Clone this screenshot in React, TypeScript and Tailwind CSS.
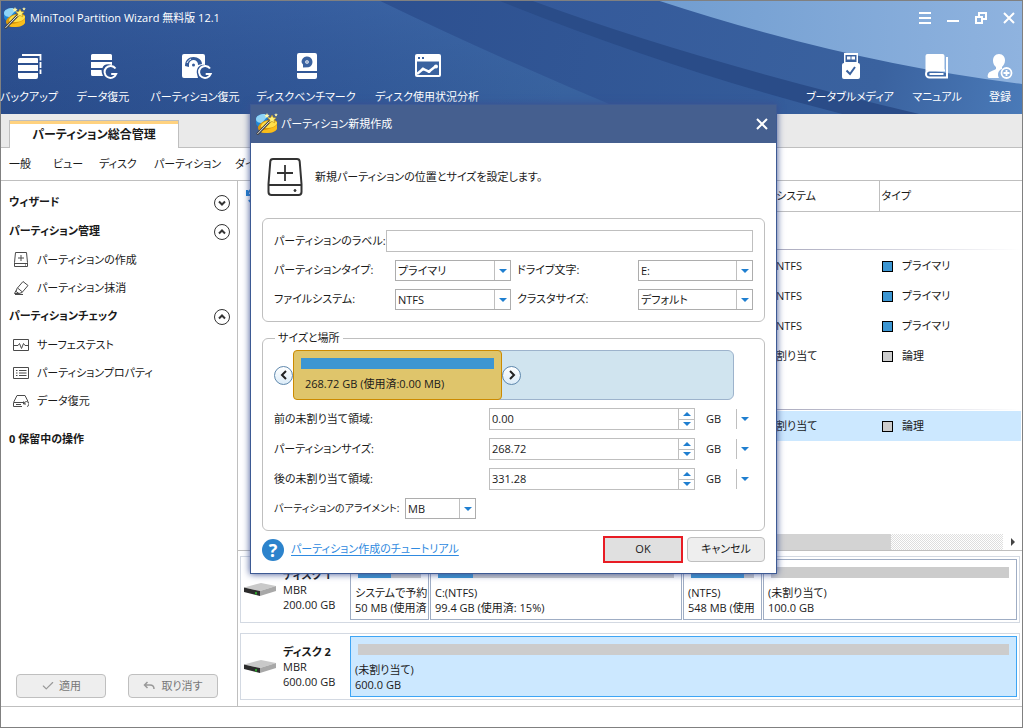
import React from 'react'
import { FiCheck } from 'react-icons/fi'

interface SIDE_ITEM {
  icon: string
  label: string
}

interface PARTITION {
  title: string
  size: string
  used: number
  className: string
}

const managementItems: SIDE_ITEM[] = [
  { icon: 'create', label: 'パーティションの作成' },
  { icon: 'wipe', label: 'パーティション抹消' },
]

const checkItems: SIDE_ITEM[] = [
  { icon: 'surface', label: 'サーフェステスト' },
  { icon: 'props', label: 'パーティションプロパティ' },
  { icon: 'recover', label: 'データ復元' },
]

const diskOne: PARTITION[] = [
  { title: 'システムで予約', size: '50 MB (使用済', used: 52, className: 'w-[79px]' },
  { title: 'C:(NTFS)', size: '99.4 GB (使用済: 15%)', used: 15, className: 'w-[252px]' },
  { title: '(NTFS)', size: '548 MB (使用', used: 84, className: 'w-[79px]' },
  { title: '(未割り当て)', size: '100.0 GB', used: 0, className: 'flex-1' },
]

/* ---------- drawings ---------- */

function AppLogo() {
  return (
    <svg viewBox="0 0 22 22" className="size-[22px] shrink-0" aria-hidden="true">
      <path d="M0 6c0-3 4-5 9-5l3 4-6 10C2 14 0 12 0 10z" fill="#1f87d6" />
      <path d="M0 6c0-3 4-5 9-5l2 3-5 6C3 10 0 9 0 6z" fill="#8fd4f7" />
      <path d="M2 14c1-3 5-6 10-7s8 0 9 2v6c-1 4-6 5-11 5s-8-2-8-6z" fill="#dd9a0a" />
      <path d="M5 13c1-3 4-5 8-5s8 0 8 2-4 5-9 5-7 0-7-2z" fill="#ffe04a" />
      <path d="M3 17c5 1 13-1 18-5v4c-2 3-6 4-11 4-4 0-6-1-7-3z" fill="#f9bd1b" />
      <path d="M1 21.500 15 7" stroke="#444" strokeWidth="2.600" />
      <path d="M1.500 20.800 14 8" stroke="#e8e8e8" strokeWidth="1" />
      <path d="m16 2 1.300 2.600 2.900.3-2.200 2 .7 2.900L16 8.400l-2.700 1.400.7-2.900-2.200-2 2.900-.3z" fill="#fff27a" stroke="#b98a10" strokeWidth=".6" />
      <path d="m11 0 .8 1.700 1.800.2-1.300 1.300.3 1.800-1.600-.9-1.600.9.3-1.800-1.300-1.300 1.800-.2z" fill="#fff6a8" />
      <path d="m20 0 .5 1.200 1.300.1-1 .9.3 1.300-1.100-.7-1.100.7.3-1.300-1-.9 1.300-.1z" fill="#fff6a8" />
    </svg>
  )
}

function HeaderBackdrop() {
  return (
    <svg viewBox="0 0 1023 113" preserveAspectRatio="none" className="absolute inset-0 size-full" aria-hidden="true">
      <defs>
        <linearGradient id="base" x1="0" y1="0" x2="1" y2="0">
          <stop offset="0" stopColor="#2c4f8f" />
          <stop offset=".3" stopColor="#345b9c" />
          <stop offset=".55" stopColor="#3e6aa7" />
        </linearGradient>
        <linearGradient id="shade" x1="0" y1="0" x2="0" y2="1">
          <stop offset="0" stopColor="#3d66a8" stopOpacity=".3" />
          <stop offset="1" stopColor="#1e3f78" stopOpacity=".2" />
        </linearGradient>
        <linearGradient id="mid" x1="380" y1="0" x2="1023" y2="113" gradientUnits="userSpaceOnUse">
          <stop offset="0" stopColor="#2d5090" />
          <stop offset=".6" stopColor="#345b99" />
          <stop offset="1" stopColor="#3f6cab" />
        </linearGradient>
        <linearGradient id="upper" x1="540" y1="0" x2="1023" y2="113" gradientUnits="userSpaceOnUse">
          <stop offset="0" stopColor="#34599a" />
          <stop offset=".7" stopColor="#3a629f" />
          <stop offset="1" stopColor="#4a7ab8" />
        </linearGradient>
        <linearGradient id="sky" x1="0" y1="0" x2="1" y2="0">
          <stop offset="0" stopColor="#719dd0" />
          <stop offset="1" stopColor="#8fb3df" />
        </linearGradient>
      </defs>
      <rect width="1023" height="113" fill="url(#base)" />
      <rect width="640" height="113" fill="url(#shade)" />
      <path d="M380 0Q500 58 633 113H1023V0z" fill="url(#mid)" />
      <path d="M500 0Q675 70 843 113H1023V0z" fill="#2a4c88" />
      <path d="M533 0Q690 58 920 113H1023V0z" fill="url(#upper)" />
      <path d="M660 0Q850 62 1023 83V0z" fill="url(#sky)" />
    </svg>
  )
}

function ToolIcon({ name }: { name: string }) {
  const icons: { [key: string]: React.ReactNode } = {
    backup: (
      <>
        <path d="M7 2h18.500V21" fill="none" stroke="#fff" strokeWidth="1.800" strokeDasharray="24 1.500 6 1.500" />
        <path d="M5 5h17a1 1 0 0 1 1 1v4H3V7a2 2 0 0 1 2-2zM3 12h20v6H3zM3 20h20v4a2 2 0 0 1-2 2H5a2 2 0 0 1-2-2z" fill="#fff" />
      </>
    ),
    data: (
      <>
        <path d="M3.500 1h18A1.500 1.500 0 0 1 23 2.500V7H2V2.500A1.500 1.500 0 0 1 3.500 1zM2 9h21v3c-5-2-9 0-9.500 3H2zM2 17h10.500c0 2 .5 4 1.500 6H3.500A1.500 1.500 0 0 1 2 21.500z" fill="#fff" />
        <path d="M26.500 15.500a6 6 0 1 0 .7 5.500h-5" fill="none" stroke="#fff" strokeWidth="2" />
      </>
    ),
    partition: (
      <>
        <path d="M3 1h19a2 2 0 0 1 2 2v9c-6-1-9 4-8 9l1 4H3a2 2 0 0 1-2-2V3a2 2 0 0 1 2-2z" fill="#fff" />
        <path d="M4 13C4 7 8 4 12.500 4S21 7 21 11l-4 1a4.500 4.500 0 0 0-9-1v3z" fill="#345b9a" />
        <path d="M6 10c1-2 2-3 4-4" stroke="#fff" fill="none" />
        <circle cx="12.500" cy="12" r="1.500" fill="#345b9a" />
        <path d="M29 15.500a6 6 0 1 0 .7 5.500h-5" fill="none" stroke="#fff" strokeWidth="2" />
      </>
    ),
    bench: (
      <>
        <path d="M7 0h16a2 2 0 0 1 2 2v16H5V2a2 2 0 0 1 2-2zM5 20h20v4a2 2 0 0 1-2 2H7a2 2 0 0 1-2-2z" fill="#fff" />
        <path d="M9.500 9a5.500 5.500 0 1 1 7 5.300L11 14.500v-3A5 5 0 0 1 9.500 9z" fill="#3a629f" />
        <circle cx="15" cy="9" r="1.800" fill="#fff" />
        <circle cx="15" cy="9" r=".8" fill="#3a629f" />
      </>
    ),
    usage: (
      <>
        <rect x="2" y="1" width="26" height="23" rx="2" fill="#fff" />
        <path d="M4 8.500h22v13.500H4z" fill="#3a629f" />
        <path d="M5 4h2v2H5zM9 4h2v2H9z" fill="#3a629f" />
        <path d="m4 21 6-5 6 2.500 7-5.500" stroke="#fff" strokeWidth="2.400" fill="none" />
        <circle cx="23" cy="13.500" r="2" fill="#fff" />
        <circle cx="10" cy="16" r="1.600" fill="#fff" />
        <circle cx="16" cy="18.500" r="1.600" fill="#fff" />
      </>
    ),
    usb: (
      <>
        <path d="M8 0h14v10H8z" fill="#fff" />
        <path d="M9.500 2h11v7h-11z" fill="#3a629f" />
        <path d="M11 3.500h3.500v3H11zM15.500 3.500H19v3h-3.500z" fill="#fff" />
        <rect x="6" y="10" width="18" height="16" rx="2" fill="#fff" />
        <path d="m10.500 17.500 3.500 3.500 5-7" stroke="#3a629f" strokeWidth="2" fill="none" />
      </>
    ),
    manual: (
      <>
        <path d="M4.500 1h15a2 2 0 0 1 2 2v14H6.500c-2 0-4 1-4 3V3a2 2 0 0 1 2-2z" fill="#fff" />
        <path d="M24 4v20.500H6.500a3.500 3.500 0 0 1 0-7H22" fill="none" stroke="#fff" strokeWidth="2" />
        <path d="M6.500 20h14v2h-14z" fill="#fff" />
      </>
    ),
    register: (
      <>
        <path d="M13 1c4 0 6 3 6 6.500 0 3-1.500 5-3 6.500v2c-4 1-5 6-3 9H3c-2 0-1.500-4 0-5.500 2-1.500 6-2.500 7-3.500v-2c-2-1.500-3-3.500-3-6.500C7 4 9 1 13 1z" fill="#fff" />
        <circle cx="20.500" cy="20" r="5" fill="none" stroke="#fff" strokeWidth="1.800" />
        <path d="M20.500 17v6M17.500 20h6" stroke="#fff" strokeWidth="1.800" />
      </>
    ),
  }
  return (
    <svg viewBox="0 0 28 27" className="h-[27px] w-7 shrink-0 overflow-visible" aria-hidden="true">
      {icons[name]}
    </svg>
  )
}

function SideIcon({ name }: { name: string }) {
  const icons: { [key: string]: React.ReactNode } = {
    create: <path d="M2.500.5h11l1 10v4h-13v-4zM1.500 11.500h13M8 3v6M5 6h6M12 13h1" />,
    wipe: <path d="m10 1.500 5 4-6 7-3 1-3-2 1-3zM4.500 8l5 4M6 13.500H1.500l1.500-3M2 14.500h8" />,
    surface: <path d="M.5 2.500h15v11H.5zM1 8.500h4l1.500-2 2 5 2-5 1.500 2h3" />,
    props: <path d="M.5 2.500h15v11H.5zM3 5.500h1.500M6 5.500h7.500M3 8h1.500M6 8h7.500M3 10.500h1.500M6 10.500h7.500" />,
    recover: <path d="M.5 9.500 4 2.500h8l3 6M.5 9.500v4H9M1 9.500h9M3 11.500h5M11 11a2.500 2.500 0 1 1 3 2.500M10.500 8.500v2.500h2.500" />,
  }
  return (
    <svg viewBox="0 0 16 16" className="size-4 shrink-0 fill-none stroke-[#4a4a4a] stroke-1" aria-hidden="true">
      {icons[name]}
    </svg>
  )
}

function DiskDrawing() {
  return (
    <svg viewBox="0 0 32 14" className="h-[14px] w-8 shrink-0" aria-hidden="true">
      <path d="M0 4.500 17 0l15 3-16 5z" fill="#c9c9c9" />
      <path d="M16 8 32 3v5l-16 5z" fill="#a8a8a8" />
      <path d="M0 4.500 16 8v5L0 9z" fill="#2c2c2c" />
      <path d="M12 9v2.500" stroke="#2ec52e" strokeWidth="1.500" />
    </svg>
  )
}

function Triangle({ up }: { up?: boolean }) {
  return (
    <svg viewBox="0 0 8 4" className="h-1 w-2 fill-[#1f7fd0]" aria-hidden="true">
      <path d={up ? 'M0 4h8L4 0z' : 'M0 0h8L4 4z'} />
    </svg>
  )
}

/* ---------- header ---------- */

function ToolButton({ icon, label, className }: { icon: string; label: string; className: string }) {
  return (
    <button className={`flex flex-col items-center gap-[9px] whitespace-nowrap ${className}`}>
      <ToolIcon name={icon} />
      <span className="leading-4">{label}</span>
    </button>
  )
}

function Header() {
  return (
    <header className="relative h-[113px] text-white">
      <HeaderBackdrop />
      <div className="relative flex h-[34px] items-center justify-between pl-[3px] pr-[7px]">
        <div className="flex items-center gap-1">
          <AppLogo />
          <h1>MiniTool Partition Wizard 無料版 12.1</h1>
        </div>
        <div className="flex gap-4 fill-none stroke-white">
          <button aria-label="メニュー">
            <svg viewBox="0 0 12 12" className="size-3 stroke-2"><path d="M0 1h12M0 6h12M0 11h12" /></svg>
          </button>
          <button aria-label="最小化">
            <svg viewBox="0 0 12 12" className="size-3 stroke-2"><path d="M0 9h12" /></svg>
          </button>
          <button aria-label="元に戻す">
            <svg viewBox="0 0 12 12" className="size-3 stroke-2"><path d="M1 5h6v6H1zM4 5V1h7v6H7" /></svg>
          </button>
          <button aria-label="閉じる">
            <svg viewBox="0 0 12 12" className="size-3 stroke-2"><path d="m1 1 10 10M11 1 1 11" /></svg>
          </button>
        </div>
      </div>
      <div className="relative flex justify-between pt-[18px]">
        <div className="flex">
          <ToolButton icon="backup" label="バックアップ" className="w-14" />
          <ToolButton icon="data" label="データ復元" className="w-[92px]" />
          <ToolButton icon="partition" label="パーティション復元" className="w-[92px]" />
          <ToolButton icon="bench" label="ディスクベンチマーク" className="w-[130px]" />
          <ToolButton icon="usage" label="ディスク使用状況分析" className="w-28" />
        </div>
        <div className="flex">
          <ToolButton icon="usb" label="ブータブルメディア" className="w-[92px]" />
          <ToolButton icon="manual" label="マニュアル" className="w-[82px]" />
          <ToolButton icon="register" label="登録" className="w-11" />
        </div>
      </div>
    </header>
  )
}

function TabsAndMenu() {
  return (
    <>
      <div className="flex h-[34px] items-end border-b border-[#bfbfbf] bg-[#eaeaea] pl-2">
        <button className="-mb-px h-7 w-[170px] border-x border-t border-[#bfbfbf] border-b-0 bg-white text-xs font-bold shadow-[inset_0_3px_0_#ffd27f]">
          パーティション総合管理
        </button>
      </div>
      <nav className="flex h-[33px] items-center gap-5 whitespace-nowrap border-b border-[#bfbfbf] pl-2">
        <button className="w-6 text-left">一般</button>
        <button className="w-[26px]">ビュー</button>
        <button className="w-[35px]">ディスク</button>
        <button className="w-[61px]">パーティション</button>
        <button>ダイ</button>
      </nav>
    </>
  )
}

/* ---------- sidebar ---------- */

function SideHeading({ label, open }: { label: string; open?: boolean }) {
  return (
    <button className="flex h-[29px] w-full items-center justify-between pl-2 pr-[7px] font-bold">
      {label}
      <svg viewBox="0 0 16 16" className="size-4 fill-none stroke-[#333]" aria-hidden="true">
        <circle cx="8" cy="8" r="7.500" />
        <path d={open ? 'm5 9.500 3-3 3 3' : 'm5 6.500 3 3 3-3'} strokeWidth="2" />
      </svg>
    </button>
  )
}

function SideList({ items }: { items: SIDE_ITEM[] }) {
  return (
    <ul>
      {items.map((item) => (
        <li key={item.label}>
          <button className="flex h-7 w-full items-center gap-2 pl-3">
            <SideIcon name={item.icon} />
            {item.label}
          </button>
        </li>
      ))}
    </ul>
  )
}

function Sidebar() {
  return (
    <aside className="flex w-[237px] shrink-0 flex-col border-r border-[#bfbfbf] pt-[7px]">
      <SideHeading label="ウィザード" />
      <SideHeading label="パーティション管理" open />
      <SideList items={managementItems} />
      <SideHeading label="パーティションチェック" open />
      <SideList items={checkItems} />
      <p className="mt-3 pl-2 font-bold leading-6">0 保留中の操作</p>
      <div className="mt-auto flex gap-[22px] pb-2 pl-[15px] text-[#777]">
        <button className="flex h-6 w-[90px] items-center justify-center gap-1 rounded-sm border border-[#bfbfbf] bg-[#eee]">
          <FiCheck className="size-3.5 text-[#999]" />
          適用
        </button>
        <button className="flex h-6 w-[90px] items-center justify-center gap-[6px] rounded-sm border border-[#bfbfbf] bg-[#eee]">
          <svg viewBox="0 0 12 10" className="h-2.5 w-3 fill-none stroke-[#999]" aria-hidden="true">
            <path d="M4.500 1 1.500 4l3 3M1.500 4H7q4 0 4 4" strokeWidth="1.500" />
          </svg>
          取り消す
        </button>
      </div>
    </aside>
  )
}

/* ---------- partition table + disk map ---------- */

function TypeRow({ fs, type, primary, selected }: { fs: string; type: string; primary?: boolean; selected?: boolean }) {
  const cell = selected ? 'bg-[#cce8ff]' : ''
  return (
    <tr className="h-[30px]">
      <td></td>
      <td className={`pl-[3px] ${cell}`}>{fs}</td>
      <td className={`pl-[3px] ${cell}`}>
        <span className="flex items-center gap-[9px]">
          <span className={`size-[11px] border border-black ${primary ? 'bg-[#3c96d2]' : 'bg-[#ccc]'}`}></span>
          {type}
        </span>
      </td>
    </tr>
  )
}

function GroupRow() {
  return (
    <tr className="h-10">
      <td></td>
      <td colSpan={2} className="pb-px align-bottom">
        <div className="h-px bg-linear-to-r from-[#a9a9bd] to-white"></div>
      </td>
    </tr>
  )
}

function PartitionTable() {
  return (
    <div className="flex-1 pl-2 pr-px">
      <table className="w-full table-fixed text-left">
        <colgroup>
          <col />
          <col className="w-[106px]" />
          <col className="w-[142px]" />
        </colgroup>
        <thead>
          <tr className="h-[30px]">
            <th className="font-normal">
              <button aria-label="更新" className="block">
                <svg viewBox="0 0 16 16" className="size-4 fill-none stroke-[#1f7fd0] stroke-2" aria-hidden="true">
                  <path d="M1 2v5h5M2 6a6 6 0 0 1 11-2M15 14V9h-5M14 10a6 6 0 0 1-11 2" />
                </svg>
              </button>
            </th>
            <th className="border-b border-r border-[#bfbfbf] pl-[3px] font-normal">システム</th>
            <th className="border-b border-[#bfbfbf] pl-[2px] font-normal">タイプ</th>
          </tr>
        </thead>
        <tbody>
          <GroupRow />
          <TypeRow fs="NTFS" type="プライマリ" primary />
          <TypeRow fs="NTFS" type="プライマリ" primary />
          <TypeRow fs="NTFS" type="プライマリ" primary />
          <TypeRow fs="割り当て" type="論理" />
          <GroupRow />
          <TypeRow fs="割り当て" type="論理" selected />
        </tbody>
      </table>
    </div>
  )
}

function ScrollBar() {
  return (
    <div className="flex h-4 pl-4">
      <div className="flex-1 bg-[#d3d3d3]"></div>
      <div className="w-28 bg-[#f3f3f3] bg-[repeating-conic-gradient(#dedede_0_25%,#fff_0_50%)] bg-[length:2px_2px]"></div>
      <button aria-label="右へスクロール" className="flex w-[19px] items-center justify-center">
        <svg viewBox="0 0 4 8" className="h-2 w-1 fill-[#444]" aria-hidden="true"><path d="m0 0 4 4-4 4z" /></svg>
      </button>
    </div>
  )
}

function PartitionBox({ data, selected }: { data: PARTITION; selected?: boolean }) {
  return (
    <div className={`overflow-hidden whitespace-nowrap border px-1 pt-[7px] leading-[15px] ${data.className} ${selected ? 'border-[#3da5f5] bg-[#cce8ff]' : 'border-[#9fadc4]'}`}>
      <div className="mx-[3px] mb-[7px] h-[11px] bg-[#ccc]">
        <div className="h-full bg-[#3c96d2]" style={{ width: `${data.used}%` }}></div>
      </div>
      <p>{data.title}</p>
      <p>{data.size}</p>
    </div>
  )
}

function DiskRow({ name, size, children }: { name: string; size: string; children: React.ReactNode }) {
  return (
    <section className="flex h-[67px] border border-[#d3d9e2] p-[2px]">
      <div className="flex w-[107px] shrink-0 items-center gap-[7px] pl-px">
        <DiskDrawing />
        <div className="leading-[15px]">
          <h2 className="font-bold">{name}</h2>
          <p>MBR</p>
          <p>{size}</p>
        </div>
      </div>
      <div className="flex min-w-0 flex-1 gap-px">{children}</div>
    </section>
  )
}

function DiskMap() {
  return (
    <div className="flex flex-col gap-[10px] border-t border-[#bfbfbf] pb-[6px] pl-[2px] pr-[2px] pt-[5px]">
      <DiskRow name="ディスク 1" size="200.00 GB">
        {diskOne.map((part) => (
          <PartitionBox key={part.title} data={part} />
        ))}
      </DiskRow>
      <DiskRow name="ディスク 2" size="600.00 GB">
        <PartitionBox data={{ title: '(未割り当て)', size: '600.0 GB', used: 0, className: 'flex-1' }} selected />
      </DiskRow>
    </div>
  )
}

/* ---------- dialog ---------- */

function Select({ id, value, className }: { id: string; value: string; className: string }) {
  return (
    <div className={`relative h-[21px] ${className}`}>
      <select id={id} className="size-full appearance-none border border-[#adadad] bg-white pl-[2px] pr-4 leading-[19px]">
        <option>{value}</option>
      </select>
      <span className="pointer-events-none absolute inset-y-px right-px flex w-4 items-center justify-center border-l border-[#bfbfbf]">
        <Triangle />
      </span>
    </div>
  )
}

function SizeRow({ id, label, value }: { id: string; label: string; value: string }) {
  return (
    <div className="flex h-[22px] items-center">
      <label htmlFor={id} className="flex-1">{label}</label>
      <div className="flex h-full w-[206px] border border-[#bfbfbf]">
        <input id={id} defaultValue={value} className="min-w-0 flex-1 pl-[2px] outline-none" />
        <div className="flex w-4 flex-col divide-y divide-[#bfbfbf] border-l border-[#bfbfbf]">
          <button aria-label="増やす" className="flex flex-1 items-center justify-center"><Triangle up /></button>
          <button aria-label="減らす" className="flex flex-1 items-center justify-center"><Triangle /></button>
        </div>
      </div>
      <div className="relative ml-[11px] mr-1 h-5 w-[43px]">
        <select aria-label={`${label} 単位`} className="size-full appearance-none bg-transparent">
          <option>GB</option>
        </select>
        <span className="pointer-events-none absolute inset-y-0 right-0 flex w-[13px] items-center justify-end border-l border-[#bfbfbf]">
          <Triangle />
        </span>
      </div>
    </div>
  )
}

function RoundHandle({ left }: { left?: boolean }) {
  return (
    <button aria-label={left ? '左へ' : '右へ'} className="flex size-[19px] shrink-0 items-center justify-center rounded-full border border-[#5f88ad] bg-linear-to-b from-white to-[#dcecf8]">
      <svg viewBox="0 0 10 10" className="size-2.5 fill-none stroke-[#222] stroke-2" aria-hidden="true">
        <path d={left ? 'M7 1 3 5l4 4' : 'm3 1 4 4-4 4'} />
      </svg>
    </button>
  )
}

function CreateDialog() {
  return (
    <div role="dialog" aria-labelledby="dialog-title" className="absolute left-[249px] top-[103px] w-[527px] border border-[#3d5a94] bg-white shadow-[0_0_7px_#3a4f90]">
      <div className="flex h-[38px] items-center gap-[3px] bg-[#455f8f] pl-[5px] pr-2 text-white">
        <AppLogo />
        <h2 id="dialog-title" className="flex-1">パーティション新規作成</h2>
        <button aria-label="ダイアログを閉じる">
          <svg viewBox="0 0 12 12" className="size-3 fill-none stroke-white stroke-2"><path d="m1 1 10 10M11 1 1 11" /></svg>
        </button>
      </div>

      <div className="flex items-center gap-3 px-4 pt-[15px]">
        <svg viewBox="0 0 36 38" className="h-[38px] w-9 fill-none stroke-[#333] stroke-2" aria-hidden="true">
          <path d="M6 1h24q2.500 0 2.700 2.500L34.500 26v8q0 3-3 3h-27q-3 0-3-3v-8L3.300 3.500Q3.500 1 6 1z" />
          <path d="M2 27h32M18 7v16M10 15h16" strokeWidth="1.800" />
          <circle cx="28" cy="32.500" r="1" className="fill-[#333] stroke-1" />
        </svg>
        <p>新規パーティションの位置とサイズを設定します。</p>
      </div>

      <div className="mx-[11px] mt-[22px] flex flex-col gap-2 rounded-md border border-[#bfbfbf] p-[11px]">
        <div className="flex h-[22px] items-center">
          <label htmlFor="label" className="w-28 whitespace-nowrap">パーティションのラベル:</label>
          <input id="label" className="h-full min-w-0 flex-1 border border-[#bfbfbf] px-1" />
        </div>
        <div className="flex items-center">
          <label htmlFor="type" className="w-[121px]">パーティションタイプ:</label>
          <Select id="type" value="プライマリ" className="w-[116px]" />
          <label htmlFor="drive" className="flex-1 pl-[6px]">ドライブ文字:</label>
          <Select id="drive" value="E:" className="w-[115px]" />
        </div>
        <div className="flex items-center">
          <label htmlFor="fs" className="w-[121px]">ファイルシステム:</label>
          <Select id="fs" value="NTFS" className="w-[116px]" />
          <label htmlFor="cluster" className="flex-1 pl-[6px]">クラスタサイズ:</label>
          <Select id="cluster" value="デフォルト" className="w-[115px]" />
        </div>
      </div>

      <fieldset className="mx-[11px] mt-2 rounded-md border border-[#bfbfbf] px-[11px] pb-[11px]">
        <legend className="ml-px px-[3px] leading-4">サイズと場所</legend>
        <div className="mr-[19px] mt-1 flex h-[50px] items-center">
          <RoundHandle left />
          <div className="flex h-full flex-1 items-center rounded-md border border-[#9db3cc] bg-[#d0e4ef]">
            <div className="-my-px -ml-px h-[50px] w-[209px] shrink-0 rounded-sm border border-[#cc8a00] bg-[#dfc56b] px-[7px] pt-[7px]">
              <div className="h-[11px] bg-[#3c96d2]"></div>
              <p className="mt-[7px] pl-1 leading-4">268.72 GB (使用済:0.00 MB)</p>
            </div>
            <RoundHandle />
          </div>
        </div>
        <div className="mt-2 flex flex-col gap-2">
          <SizeRow id="before" label="前の未割り当て領域:" value="0.00" />
          <SizeRow id="size" label="パーティションサイズ:" value="268.72" />
          <SizeRow id="after" label="後の未割り当て領域:" value="331.28" />
          <div className="flex items-center">
            <label htmlFor="align" className="w-[131px] whitespace-nowrap text-[10px]">パーティションのアライメント:</label>
            <Select id="align" value="MB" className="w-[71px]" />
          </div>
        </div>
      </fieldset>

      <div className="flex items-center gap-1 px-[11px] pb-[10px] pt-[5px]">
        <span className="mr-[3px] flex size-[22px] items-center justify-center rounded-full bg-[#2c83cc] text-lg font-bold leading-none text-white">?</span>
        <div className="flex-1">
          <a href="#tutorial" className="text-[#2f8ae0] underline underline-offset-2">パーティション作成のチュートリアル</a>
        </div>
        <button className="h-[27px] w-20 border-2 border-[#e81c24] bg-[#e0e0e0]">OK</button>
        <button className="h-[25px] w-[78px] rounded-sm border border-[#bfbfbf] bg-[#eee]">キャンセル</button>
      </div>
    </div>
  )
}

export default function App() {
  return (
    <div className="relative flex min-h-screen flex-col border border-[#808080] bg-white font-['Open_Sans','Noto_Sans_CJK_JP',sans-serif] text-[11px] text-[#1a1a1a] [font-feature-settings:'palt']">
      <Header />
      <TabsAndMenu />
      <div className="flex flex-1">
        <Sidebar />
        <main className="flex min-w-0 flex-1 flex-col">
          <PartitionTable />
          <ScrollBar />
          <DiskMap />
        </main>
      </div>
      <footer className="h-[21px] border-t border-[#bfbfbf]"></footer>
      <CreateDialog />
    </div>
  )
}
